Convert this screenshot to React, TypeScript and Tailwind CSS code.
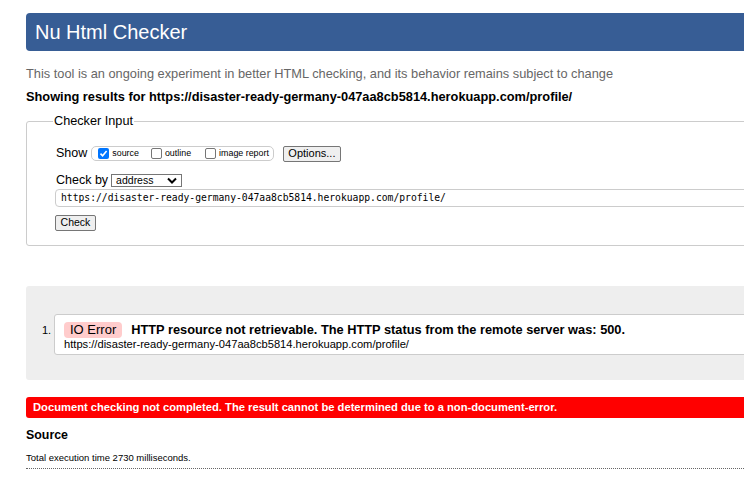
const url = "https://disaster-ready-germany-047aa8cb5814.herokuapp.com/profile/";

function Box({ checked }: { checked?: boolean }) {
  if (checked) {
    return (
      <span className="flex h-[11px] w-[11px] shrink-0 items-center justify-center rounded-[2px] bg-[#0075ff]">
        <svg width="9" height="9" viewBox="0 0 9 9">
          <polyline points="1.5,4.6 3.6,6.7 7.6,2" fill="none" stroke="white" strokeWidth="1.6" />
        </svg>
      </span>
    );
  }
  return <span className="block h-[11px] w-[11px] shrink-0 rounded-[2px] border border-[#767676] bg-white" />;
}

export default function App() {
  return (
    <div className="h-[487px] w-full overflow-hidden bg-white font-['Liberation_Sans',Arial,sans-serif] text-black">
      <div className="ml-[26px] w-[780px] pt-[13px]">
        <h1 className="flex h-[38px] items-center rounded-[4px] bg-[#375d95] pl-[9px] text-[20px] text-white">
          Nu Html Checker
        </h1>
        <p className="mt-[15px] text-[12.8px] leading-[16px] text-[#666]">
          This tool is an ongoing experiment in better HTML checking, and its behavior remains subject to change
        </p>
        <p className="mt-[7px] text-[12.8px] font-bold leading-[16px]">Showing results for {url}</p>

        <fieldset className="mt-[9px] rounded-[3px] border border-[#ccc] pb-[14px] pl-[28px]">
          <legend className="-ml-[2px] px-[1px] text-[12.7px] leading-[15px]">Checker Input</legend>

          <div className="mt-[16px] flex h-[17px] items-center text-[12.5px]">
            <span className="pl-[1px]">Show</span>
            <div className="ml-[4px] flex h-[15px] items-center rounded-[5px] border border-[#ccc] pl-[6px] pr-[4px] text-[8.9px]">
              <Box checked />
              <span className="ml-[3px]">source</span>
              <span className="ml-[12px] flex"><Box /></span>
              <span className="ml-[3px]">outline</span>
              <span className="ml-[14px] flex"><Box /></span>
              <span className="ml-[3px]">image report</span>
            </div>
            <button className="ml-[9px] flex h-[16px] w-[58px] items-center justify-center rounded-[2px] border border-[#767676] bg-[#efefef] text-[11px]">
              Options...
            </button>
          </div>

          <div className="mt-[12px] flex h-[13px] items-center text-[12.5px]">
            <span className="pl-[1px]">Check by</span>
            <div className="ml-[3px] flex h-[13px] w-[71px] items-center justify-between border border-[#767676] pl-[4px] pr-[4px]">
              <span className="text-[10.5px] leading-[11px]">address</span>
              <svg width="10" height="7" viewBox="0 0 10 7">
                <polyline points="1,1.5 5,5.5 9,1.5" fill="none" stroke="black" strokeWidth="2" />
              </svg>
            </div>
          </div>

          <div className="mt-[2px] flex h-[18px] items-center rounded-[4px] border border-[#ccc] pl-[5px] font-['DejaVu_Sans_Mono',monospace] text-[9.7px]">
            {url}
          </div>

          <button className="mt-[8px] flex h-[16px] w-[41px] items-center justify-center rounded-[2px] border border-[#767676] bg-[#efefef] text-[10.5px]">
            Check
          </button>
        </fieldset>

        <div className="mt-[40px] h-[94px] rounded-[3px] bg-[#eee] pl-[16px] pt-[28px]">
          <div className="flex">
            <span className="w-[12px] pt-[10px] text-[11px] leading-[12px]">1.</span>
            <div className="flex-1 rounded-[3px] border border-[#ccc] bg-white pb-[4px] pl-[9px] pt-[5px]">
              <div className="flex items-center">
                <span className="flex h-[16px] items-center rounded-[4px] bg-[#fcc] px-[6px] text-[13px]">IO Error</span>
                <span className="ml-[9px] text-[12.8px] font-bold">
                  HTTP resource not retrievable. The HTTP status from the remote server was: 500.
                </span>
              </div>
              <div className="text-[11.15px] leading-[11px]">{url}</div>
            </div>
          </div>
        </div>

        <div className="mt-[17px] flex h-[21px] items-center rounded-[3px] bg-[#f00] pl-[7px] text-[11.2px] font-bold text-white">
          Document checking not completed. The result cannot be determined due to a non-document-error.
        </div>

        <h2 className="mt-[9px] text-[12.4px] font-bold leading-[16px]">Source</h2>
        <p className="mt-[9px] text-[9.5px] leading-[11px]">Total execution time 2730 milliseconds.</p>
        <div className="mt-[5px] border-b border-dotted border-[#666]" />
      </div>
    </div>
  );
}
